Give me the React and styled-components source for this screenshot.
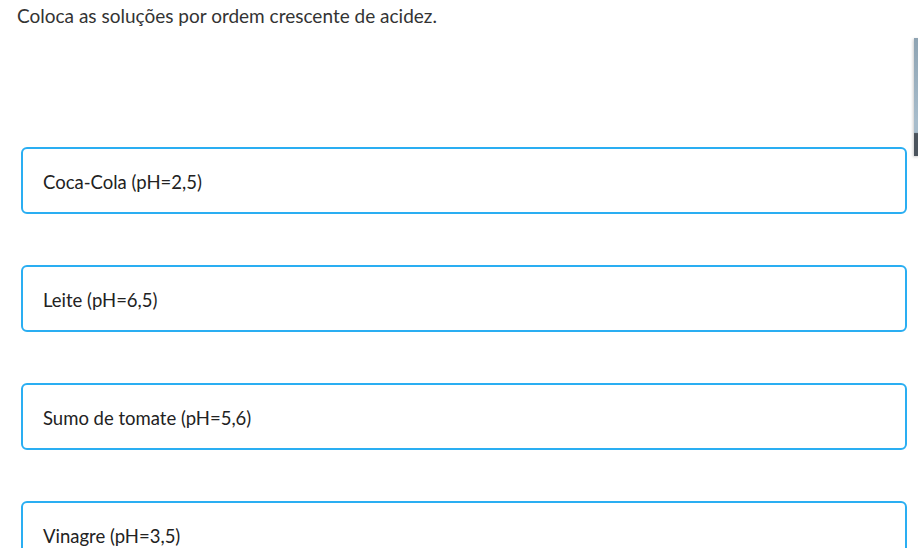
import styled, { createGlobalStyle } from "styled-components";

const GlobalStyle = createGlobalStyle`
  html, body {
    margin: 0;
    padding: 0;
    background: #ffffff;
    overflow: hidden;
  }
  body {
    font-family: Lato, "Open Sans", "Liberation Sans", sans-serif;
  }
`;

const Page = styled.div`
  position: relative;
  width: 918px;
  height: 548px;
  overflow: hidden;
`;

const Question = styled.p`
  margin: 0;
  padding: 4px 0 0 17px;
  font-size: 19px;
  line-height: 24px;
  color: #333;
`;

const List = styled.div`
  display: flex;
  flex-direction: column;
  gap: 51px;
  padding: 119px 11px 0 21px;
`;

const Option = styled.div`
  box-sizing: border-box;
  height: 67px;
  border: 2px solid #2aaef2;
  border-radius: 6px;
  display: flex;
  align-items: center;
  padding: 2px 20px 0;
  font-size: 18.5px;
  color: #222;
`;

const SideImage = styled.div`
  position: absolute;
  top: 38px;
  left: 914px;
  width: 6px;
  height: 118px;
  background: linear-gradient(
    180deg,
    #8ea3b2 0%,
    #a7bccb 70%,
    #a7bccb 80%,
    #4b545d 81%,
    #4b545d 100%
  );
  box-shadow: -1px 1px 3px rgba(0, 0, 0, 0.2);
`;

const options = [
  "Coca-Cola (pH=2,5)",
  "Leite (pH=6,5)",
  "Sumo de tomate (pH=5,6)",
  "Vinagre (pH=3,5)",
];

const App = () => {
  return (
    <Page>
      <GlobalStyle />
      <Question>Coloca as soluções por ordem crescente de acidez.</Question>
      <List>
        {options.map((label) => (
          <Option key={label}>{label}</Option>
        ))}
      </List>
      <SideImage />
    </Page>
  );
};

export default App;
